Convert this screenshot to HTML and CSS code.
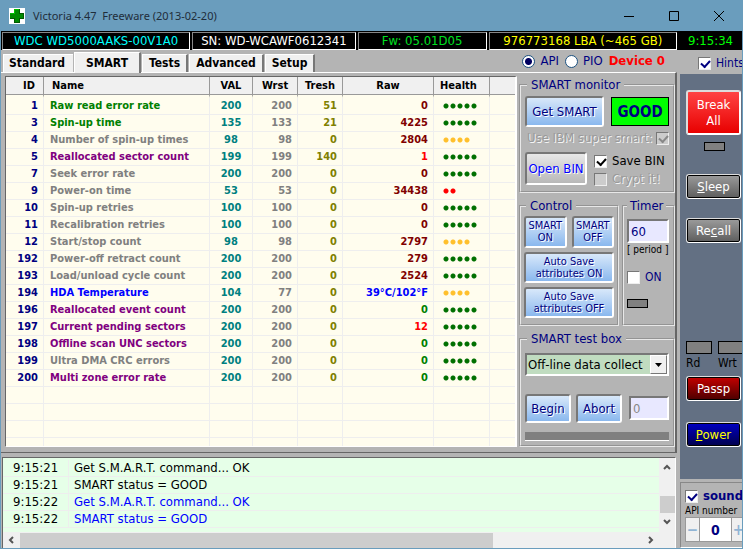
FILE: index.html
```html
<!DOCTYPE html>
<html lang="en">
<head>
    <meta charset="UTF-8">
    <meta name="viewport" content="width=device-width, initial-scale=1.0">
    <title>Victoria 4.47 Freeware (2013-02-20)</title>
    <link rel="stylesheet" href="styles.css">
</head>
<body>
    <header class="titlebar">
        <svg class="app-icon" viewBox="0 0 16 16" width="16" height="16">
            <rect width="16" height="16" fill="#fff"/>
            <path d="M5 1h6v4h4v6h-4v4H5v-4H1V5h4z" fill="#005a00"/>
            <path d="M5 1h5v5h4v4h-4v4H6v-4H1V5h4z" fill="#008a00"/>
            <path d="M5 1h5v1H6v4H1V5h4z" fill="#00c000"/>
        </svg>
        <span class="title">Victoria 4.47&nbsp; Freeware (2013-02-20)</span>
        <button class="win-btn" aria-label="Minimize"><svg viewBox="0 0 10 10" width="10" height="10"><path d="M0 5.5h10"/></svg></button>
        <button class="win-btn" aria-label="Maximize"><svg viewBox="0 0 10 10" width="10" height="10"><path d="M.5.5h9v9h-9z"/></svg></button>
        <button class="win-btn" aria-label="Close"><svg viewBox="0 0 10 10" width="10" height="10"><path d="M0 0l10 10M10 0L0 10"/></svg></button>
    </header>

    <div class="info-bar">
        <div class="info model">WDC WD5000AAKS-00V1A0</div>
        <div class="info serial">SN: WD-WCAWF0612341</div>
        <div class="info firmware">Fw: 05.01D05</div>
        <div class="info lba">976773168 LBA (~465 GB)</div>
        <div class="clock">9:15:34</div>
    </div>

    <div class="window">
        <main class="main">
            <div class="top-row">
                <nav class="tabs">
                    <button class="tab">Standard</button>
                    <button class="tab active">SMART</button>
                    <button class="tab">Tests</button>
                    <button class="tab">Advanced</button>
                    <button class="tab">Setup</button>
                </nav>
                <div class="modes">
                    <label><input class="radio" type="radio" name="mode" checked>API</label>
                    <label><input class="radio" type="radio" name="mode">PIO</label>
                    <strong class="device">Device 0</strong>
                </div>
            </div>

            <div class="panel">
                <div class="smart-list">
                    <table class="smart">
                        <colgroup>
                            <col class="c-id"><col class="c-name"><col class="c-val"><col class="c-wrst"><col class="c-tresh"><col class="c-raw"><col class="c-health"><col>
                        </colgroup>
                        <thead>
                            <tr><th class="r">ID</th><th class="l">Name</th><th>VAL</th><th>Wrst</th><th>Tresh</th><th>Raw</th><th class="l">Health</th><th></th></tr>
                        </thead>
                        <tbody>
                            <tr class="green"><td>1</td><td>Raw read error rate</td><td>200</td><td>200</td><td>51</td><td>0</td><td><i class="dots d5"></i></td><td></td></tr>
                            <tr class="green"><td>3</td><td>Spin-up time</td><td>135</td><td>133</td><td>21</td><td>4225</td><td><i class="dots d5"></i></td><td></td></tr>
                            <tr><td>4</td><td>Number of spin-up times</td><td>98</td><td>98</td><td>0</td><td>2804</td><td><i class="dots d4"></i></td><td></td></tr>
                            <tr class="purple"><td>5</td><td>Reallocated sector count</td><td>199</td><td>199</td><td>140</td><td class="bad">1</td><td><i class="dots d5"></i></td><td></td></tr>
                            <tr><td>7</td><td>Seek error rate</td><td>200</td><td>200</td><td>0</td><td>0</td><td><i class="dots d5"></i></td><td></td></tr>
                            <tr><td>9</td><td>Power-on time</td><td>53</td><td>53</td><td>0</td><td>34438</td><td><i class="dots d2"></i></td><td></td></tr>
                            <tr><td>10</td><td>Spin-up retries</td><td>100</td><td>100</td><td>0</td><td>0</td><td><i class="dots d5"></i></td><td></td></tr>
                            <tr><td>11</td><td>Recalibration retries</td><td>100</td><td>100</td><td>0</td><td>0</td><td><i class="dots d5"></i></td><td></td></tr>
                            <tr><td>12</td><td>Start/stop count</td><td>98</td><td>98</td><td>0</td><td>2797</td><td><i class="dots d4"></i></td><td></td></tr>
                            <tr><td>192</td><td>Power-off retract count</td><td>200</td><td>200</td><td>0</td><td>279</td><td><i class="dots d5"></i></td><td></td></tr>
                            <tr><td>193</td><td>Load/unload cycle count</td><td>200</td><td>200</td><td>0</td><td>2524</td><td><i class="dots d5"></i></td><td></td></tr>
                            <tr class="blue"><td>194</td><td>HDA Temperature</td><td>104</td><td>77</td><td>0</td><td class="temp">39°C/102°F</td><td><i class="dots d4"></i></td><td></td></tr>
                            <tr class="purple"><td>196</td><td>Reallocated event count</td><td>200</td><td>200</td><td>0</td><td class="ok">0</td><td><i class="dots d5"></i></td><td></td></tr>
                            <tr class="purple"><td>197</td><td>Current pending sectors</td><td>200</td><td>200</td><td>0</td><td class="bad">12</td><td><i class="dots d5"></i></td><td></td></tr>
                            <tr class="purple"><td>198</td><td>Offline scan UNC sectors</td><td>200</td><td>200</td><td>0</td><td class="ok">0</td><td><i class="dots d5"></i></td><td></td></tr>
                            <tr><td>199</td><td>Ultra DMA CRC errors</td><td>200</td><td>200</td><td>0</td><td class="ok">0</td><td><i class="dots d5"></i></td><td></td></tr>
                            <tr class="purple"><td>200</td><td>Multi zone error rate</td><td>200</td><td>200</td><td>0</td><td class="ok">0</td><td><i class="dots d5"></i></td><td></td></tr>
                            <tr><td></td><td></td><td></td><td></td><td></td><td></td><td></td><td></td></tr>
                            <tr><td></td><td></td><td></td><td></td><td></td><td></td><td></td><td></td></tr>
                            <tr><td></td><td></td><td></td><td></td><td></td><td></td><td></td><td></td></tr>
                            <tr><td></td><td></td><td></td><td></td><td></td><td></td><td></td><td></td></tr>
                        </tbody>
                    </table>
                </div>

                <div class="tools">
                    <fieldset class="group monitor">
                        <legend>SMART monitor</legend>
                        <div class="row">
                            <button class="btn get">Get SMART</button>
                            <output class="status">GOOD</output>
                        </div>
                        <label class="ibm disabled">Use IBM super smart:<input class="check" type="checkbox" checked disabled></label>
                        <div class="row">
                            <button class="btn gray open">Open BIN</button>
                            <div class="bin-opts">
                                <label><input class="check" type="checkbox" checked>Save BIN</label>
                                <label class="disabled"><input class="check" type="checkbox" disabled>Crypt it!</label>
                            </div>
                        </div>
                    </fieldset>

                    <div class="pair">
                        <fieldset class="group control">
                            <legend>Control</legend>
                            <div class="control-grid">
                                <button class="btn small">SMART ON</button>
                                <button class="btn small">SMART OFF</button>
                                <button class="btn small wide">Auto Save attributes ON</button>
                                <button class="btn small wide">Auto Save attributes OFF</button>
                            </div>
                        </fieldset>
                        <fieldset class="group timer">
                            <legend>Timer</legend>
                            <input class="field" id="period" type="text" value="60">
                            <label class="period" for="period">[ period ]</label>
                            <label class="timer-on"><input class="check" type="checkbox">ON</label>
                            <span class="led"></span>
                        </fieldset>
                    </div>

                    <fieldset class="group testbox">
                        <legend>SMART test box</legend>
                        <div class="select-wrap">
                            <select class="select" aria-label="Test type"><option>Off-line data collect</option></select>
                            <span class="drop"><svg viewBox="0 0 7 4" width="7" height="4"><path d="M0 0h7L3.500 4z"/></svg></span>
                        </div>
                        <div class="test-actions">
                            <button class="btn">Begin</button>
                            <button class="btn">Abort</button>
                            <input class="field off" type="text" value="0" aria-label="Progress" disabled>
                        </div>
                        <div class="progress"></div>
                    </fieldset>
                </div>
            </div>

            <div class="log">
                <table class="log-table">
                    <tbody>
                        <tr><td>9:15:21</td><td>Get S.M.A.R.T. command... OK</td></tr>
                        <tr><td>9:15:21</td><td>SMART status = GOOD</td></tr>
                        <tr class="blue"><td>9:15:22</td><td>Get S.M.A.R.T. command... OK</td></tr>
                        <tr class="blue"><td>9:15:22</td><td>SMART status = GOOD</td></tr>
                    </tbody>
                </table>
                <div class="vscroll">
                    <svg viewBox="0 0 8 6" width="8" height="6"><path d="M1 5l3-3 3 3"/></svg>
                    <span class="vthumb"></span>
                    <svg viewBox="0 0 8 6" width="8" height="6"><path d="M1 1l3 3 3-3"/></svg>
                </div>
                <div class="hscroll">
                    <svg viewBox="0 0 6 8" width="6" height="8"><path d="M5 1L2 4l3 3"/></svg>
                    <div class="htrack"><div class="hthumb"></div></div>
                    <svg viewBox="0 0 6 8" width="6" height="8"><path d="M1 1l3 3-3 3"/></svg>
                </div>
            </div>
        </main>

        <aside class="side">
            <label class="hints"><input class="check" type="checkbox" checked>Hints</label>
            <div class="side-panel">
                <button class="sbtn break">Break All</button>
                <span class="led"></span>
                <button class="sbtn sleep"><u>S</u>leep</button>
                <button class="sbtn recall">Re<u>c</u>all</button>
                <div class="lamps">
                    <div class="lamp"><span></span>Rd</div>
                    <div class="lamp"><span></span>Wrt</div>
                </div>
                <button class="sbtn passp">Passp</button>
                <button class="sbtn power"><u>P</u>ower</button>
            </div>
            <div class="sound-panel">
                <label class="sound"><input class="check" type="checkbox" checked>sound</label>
                <label class="api-label" for="api">API number</label>
                <div class="spinner">
                    <button aria-label="Less">−</button>
                    <input id="api" type="text" value="0">
                    <button aria-label="More">+</button>
                </div>
            </div>
        </aside>
    </div>
</body>
</html>
```
FILE: styles.css
```css
* {
    box-sizing: border-box;
}
body {
    margin: 0;
    height: 100vh;
    display: flex;
    flex-direction: column;
    overflow: hidden;
    background: #b4b4b4;
    border: solid #6a9dbd;
    border-width: 0 1px 1px;
    font-family: Tahoma, "DejaVu Sans Condensed", "Noto Sans", sans-serif;
    font-size: 12px;
    line-height: 16px;
    color: #000;
}
button, input, select {
    font: inherit;
    color: inherit;
    margin: 0;
    padding: 0;
}
label {
    display: flex;
    align-items: center;
    white-space: nowrap;
}

/* title bar */
.titlebar {
    flex: none;
    height: 31px;
    display: flex;
    align-items: center;
    padding: 0 1px 0 8px;
    background: #6a9dbd;
    font-family: "Noto Sans", sans-serif;
    font-size: 11px;
    color: #1f2d3a;
}
.app-icon {
    margin-right: 8px;
}
.title {
    flex: 1;
}
.win-btn {
    width: 45px;
    height: 30px;
    border: 0;
    background: none;
}
.win-btn svg {
    display: block;
    margin: 0 auto;
    fill: none;
    stroke: #000;
}

/* drive info */
.info-bar {
    flex: none;
    height: 19px;
    display: grid;
    grid-template-columns: 188fr 163fr 129fr 188fr 63px;
    gap: 2px;
    padding: 1px 0 1px 1px;
    background: #000;
    font-size: 13px;
    line-height: 16px;
    text-align: center;
    white-space: nowrap;
}
.info {
    border: 1px solid #fff;
    border-top-color: #888;
    border-left-color: #888;
}
.model { color: #0ff; }
.serial { color: #fff; }
.firmware { color: #00e020; }
.lba { color: #ff0; }
.clock {
    color: #0f0;
    line-height: 18px;
}

.window {
    flex: 1;
    min-height: 0;
    display: grid;
    grid-template-columns: minmax(0, 1fr) 62px;
    gap: 3px;
}
.main {
    display: flex;
    flex-direction: column;
    min-height: 0;
}

/* tabs */
.top-row {
    flex: none;
    height: 22px;
    display: flex;
    justify-content: space-between;
    padding-left: 2px;
}
.tabs {
    display: flex;
    align-items: flex-end;
    gap: 1px;
}
.tab {
    height: 18px;
    padding: 0 6px;
    border: 1px solid #fff;
    border-bottom: 0;
    border-right: 2px solid #777;
    background: #f0f0f0;
    font-size: 12px;
    line-height: 17px;
    font-weight: bold;
}
.tab:first-child {
    padding: 0 8px 0 5px;
    border-right: 0;
}
.tab.active {
    height: 21px;
    margin-bottom: -1px;
    padding: 0 11px;
    z-index: 1;
}
.modes {
    display: flex;
    align-items: center;
    gap: 6px;
    padding-right: 12px;
    font-size: 13px;
    color: #000080;
}
.radio {
    appearance: none;
    width: 13px;
    height: 13px;
    margin-right: 5px;
    border: 1px solid #1c5180;
    border-radius: 50%;
    background: #fff;
}
.radio:checked {
    background: radial-gradient(#000060 0 3px, #fff 4px);
}
.device {
    color: #f00;
    font-size: 13px;
}

/* main panel */
.panel {
    flex: 1;
    min-height: 0;
    display: grid;
    grid-template-columns: minmax(0, 1fr) 156px;
    gap: 2px;
    padding: 3px 0 7px 4px;
    border: solid #666;
    border-width: 1px 2px 1px 0;
    border-top-color: #fff;
}
.smart-list {
    overflow: hidden;
    border: 1px solid #666;
    border-right: 2px solid #fff;
    border-bottom-color: #fff;
    background: #fffdee;
}
.smart {
    width: 100%;
    table-layout: fixed;
    border-collapse: separate;
    border-spacing: 0;
    font-size: 11px;
    font-weight: bold;
    line-height: 16px;
    white-space: nowrap;
}
.c-id { width: 38px; }
.c-name { width: 166px; }
.c-val { width: 43px; }
.c-wrst { width: 45px; }
.c-tresh { width: 45px; }
.c-raw { width: 91px; }
.c-health { width: 56px; }
.smart th {
    height: 21px;
    padding: 0;
    border-right: 1px solid #999;
    border-bottom: 3px solid #fffdee;
    background: linear-gradient(#f0f0f0 17px, #999 17px);
}
.smart th.r { text-align: right; padding-right: 8px; }
.smart th.l { text-align: left; padding-left: 8px; }
.smart th.l:nth-child(7) { padding-left: 6px; }
.smart td {
    height: 17px;
    padding: 0 5px;
    border-right: 1px solid #eee;
    border-bottom: 1px solid #eee;
    text-align: right;
}
.smart td:nth-child(1) { color: #000080; }
.smart td:nth-child(2) { color: #808080; text-align: left; padding-left: 6px; }
.smart td:nth-child(3) { color: #008080; text-align: center; padding: 0; }
.smart td:nth-child(4) { color: #808080; }
.smart td:nth-child(5) { color: #808000; }
.smart td:nth-child(6) { color: #800000; }
.smart td:nth-child(7) { text-align: left; padding-left: 9px; }
.smart td:last-child, .smart th:last-child { border-right: 0; }
.smart .green td:nth-child(2) { color: #008000; }
.smart .purple td:nth-child(2) { color: #800080; }
.smart .blue td:nth-child(2), .smart td.temp:nth-child(6) { color: #00f; }
.smart td.bad:nth-child(6) { color: #f00; }
.smart td.ok:nth-child(6) { color: #008000; }

.dots {
    display: block;
    height: 7px;
    margin-top: 1px;
    background: radial-gradient(circle at 3px 3px, currentColor 2px, transparent 3px) 0 0 / 7px 7px;
}
.d5 { width: 35px; color: #007000; }
.d4 { width: 28px; color: #ffc02c; }
.d2 { width: 14px; color: #f00; }

/* right tools */
.tools {
    display: flex;
    flex-direction: column;
    gap: 4px;
    color: #000080;
}
.group {
    min-width: 0;
    margin: 0;
    padding: 0 4px;
    border: 2px groove #e8e8e8;
}
.group legend {
    height: 17px;
    margin-left: 2px;
    padding: 0 4px;
    font-size: 13px;
    line-height: 17px;
}
.row {
    display: flex;
    gap: 7px;
}
.btn {
    border: 2px solid;
    border-color: #777 #fff #fff #777;
    border-radius: 3px;
    background: linear-gradient(#d8e8fa, #8ab8ee);
    text-shadow: 1px 1px #fff;
    font-size: 13px;
}
.btn.gray {
    background: linear-gradient(#e8e8e8, #b8b8b8);
    color: #00f;
}
.btn.small {
    padding: 0 2px;
    font-size: 11px;
    line-height: 12px;
}
.monitor {
    height: 117px;
    font-size: 13px;
}
.get {
    width: 79px;
    height: 31px;
    margin-top: 3px;
}
.status {
    flex: 1;
    height: 29px;
    margin-top: 4px;
    border: 1px solid #000;
    background: #0f0;
    font-size: 15px;
    font-weight: bold;
    line-height: 28px;
    text-align: center;
}
.disabled {
    color: #9a9a9a;
    text-shadow: 1px 1px #f4f4f4;
}
.ibm {
    height: 22px;
    justify-content: space-between;
    padding-left: 2px;
}
.ibm .check {
    margin-right: 0;
}
.check {
    appearance: none;
    flex: none;
    position: relative;
    width: 13px;
    height: 13px;
    margin-right: 5px;
    border: 1px solid;
    border-color: #777 #eee #eee #777;
    background: #fff;
}
.check:checked::after {
    content: "";
    position: absolute;
    left: 2px;
    top: 2px;
    width: 7px;
    height: 4px;
    border: solid currentColor;
    border-width: 0 0 2px 2px;
    transform: rotate(-48deg);
}
.check:disabled {
    background: #ccc;
    color: #888;
}
.open {
    width: 62px;
    height: 33px;
    margin-top: 3px;
}
.bin-opts {
    display: flex;
    flex-direction: column;
    gap: 2px;
    padding-top: 4px;
    color: #000;
}
.bin-opts .disabled {
    color: #9a9a9a;
}
.pair {
    display: grid;
    grid-template-columns: minmax(0, 1fr) 53px;
    gap: 3px;
}
.control {
    height: 129px;
    padding: 0 3px;
}
.control-grid {
    display: grid;
    grid-template-columns: 1fr 1fr;
    grid-template-rows: 32px 31px 31px;
    gap: 4px 5px;
    padding-top: 2px;
}
.wide {
    grid-column: span 2;
}
.timer {
    padding: 0 3px;
}
.timer legend {
    margin-left: 0;
    padding: 0 3px;
}
.field {
    display: block;
    width: 42px;
    height: 24px;
    padding-left: 2px;
    border: 2px solid;
    border-color: #777 #fff #fff #777;
    background: #e8e8ff;
    font-size: 13px;
}
.field.off {
    color: #888;
}
.timer .field {
    margin: 5px 0 0;
}
.period {
    height: 14px;
    font-size: 10px;
    color: #000;
}
.timer-on {
    margin: 12px 0 14px;
    color: #000080;
}
.led {
    display: block;
    width: 21px;
    height: 9px;
    border: 1px solid #000;
    background: #808080;
}
.select-wrap {
    position: relative;
    margin-top: 6px;
}
.select {
    appearance: none;
    display: block;
    width: 100%;
    height: 23px;
    padding-left: 1px;
    border: 2px solid;
    border-color: #777 #fff #fff #777;
    border-radius: 0;
    background: #c0dcc0;
    color: #000;
    font-size: 13px;
}
.drop {
    position: absolute;
    top: 2px;
    right: 2px;
    bottom: 2px;
    width: 17px;
    display: grid;
    place-items: center;
    border: 1px solid;
    border-color: #fff #777 #777 #fff;
    background: #f0f0f0;
    pointer-events: none;
}
.test-actions {
    display: flex;
    gap: 5px;
    margin-top: 18px;
}
.test-actions .btn {
    width: 46px;
    height: 29px;
}
.test-actions .field {
    flex: 1;
    min-width: 0;
    margin: 2px 0 0 2px;
}
.progress {
    height: 9px;
    margin: 9px 0 4px;
    border-bottom: 1px solid #fff;
    background: #808080;
}

/* log */
.log {
    flex: none;
    height: 91px;
    display: grid;
    grid-template-columns: minmax(0, 1fr) 16px;
    grid-template-rows: minmax(0, 1fr) 16px;
    margin: 4px 1px 0;
    border: solid #666;
    border-width: 1px 1px 0;
    border-right-color: #fff;
    background: #e6ffe8;
}
.log-table {
    width: 100%;
    align-self: start;
    table-layout: fixed;
    border-spacing: 0;
    padding-top: 2px;
    font-size: 13px;
    line-height: 16px;
}
.log-table td {
    height: 17px;
    padding: 0 5px;
    border-bottom: 1px solid #eee;
}
.log-table td:first-child {
    width: 66px;
    padding-left: 10px;
    border-right: 1px solid #eee;
}
.log .blue td:last-child {
    color: #00f;
}
.log svg {
    flex: none;
    fill: none;
    stroke: #555;
    stroke-width: 2;
}
.vscroll {
    display: flex;
    flex-direction: column;
    align-items: center;
    padding: 6px 0 7px;
    background: #f0f0f0;
}
.vthumb {
    width: 15px;
    height: 17px;
    margin: auto 0 6px;
    background: #cdcdcd;
}
.hscroll {
    grid-column: span 2;
    display: flex;
    align-items: center;
    gap: 6px;
    padding: 0 21px 0 5px;
    background: #f0f0f0;
}
.htrack {
    flex: 1;
}
.hthumb {
    width: 76%;
    height: 15px;
    background: #cdcdcd;
}

/* right side */
.side {
    display: flex;
    flex-direction: column;
    min-width: 0;
    overflow: hidden;
}
.hints {
    flex: none;
    height: 24px;
    padding: 2px 0 0 18px;
    color: #000080;
}
.side-panel {
    flex: 1;
    display: flex;
    flex-direction: column;
    align-items: flex-start;
    padding: 16px 0 0 6px;
    background: #637083;
}
.sbtn {
    width: 55px;
    height: 25px;
    border: 2px solid;
    border-color: #ddd #fff #fff #ddd;
    border-radius: 3px;
    outline: 1px solid #000;
    outline-offset: -2px;
    background: linear-gradient(#999, #606060);
    color: #fff;
    font-size: 13px;
}
.break {
    height: 45px;
    background: linear-gradient(#ff4444, #e80000);
    outline: 0;
}
.side-panel .led {
    margin: 7px 0 23px 18px;
}
.sleep {
    margin-bottom: 19px;
}
.lamps {
    display: flex;
    gap: 6px;
    margin: auto 0 5px;
    color: #000;
    text-indent: 2px;
    line-height: 16px;
}
.lamp span {
    display: block;
    width: 26px;
    height: 13px;
    margin-bottom: 1px;
    border: 1px solid #000;
    background: #808080;
}
.passp {
    margin-bottom: 21px;
    background: linear-gradient(#c00000, #500000);
}
.power {
    margin-bottom: 32px;
    background: linear-gradient(#0000c0, #000050);
    color: #ff0;
}
.sound-panel {
    flex: none;
    height: 66px;
    margin-top: 3px;
    padding: 4px 0 0 4px;
    border: 1px solid #888;
    border-bottom-color: #fff;
    border-right: 0;
    color: #000080;
}
.sound {
    height: 18px;
    font-size: 13px;
    font-weight: bold;
}
.api-label {
    height: 12px;
    font-size: 10px;
    color: #000;
}
.spinner {
    display: grid;
    grid-template-columns: 15px 31px 15px;
    height: 25px;
}
.spinner button {
    border: 1px solid #999;
    background: #f0f0f0;
    font-size: 15px;
    font-weight: bold;
    line-height: 20px;
    color: #91b4d4;
}
.spinner input {
    min-width: 0;
    border: solid #999;
    border-width: 1px 0;
    background: #fff;
    text-align: center;
    font-size: 14px;
    font-weight: bold;
}
```
